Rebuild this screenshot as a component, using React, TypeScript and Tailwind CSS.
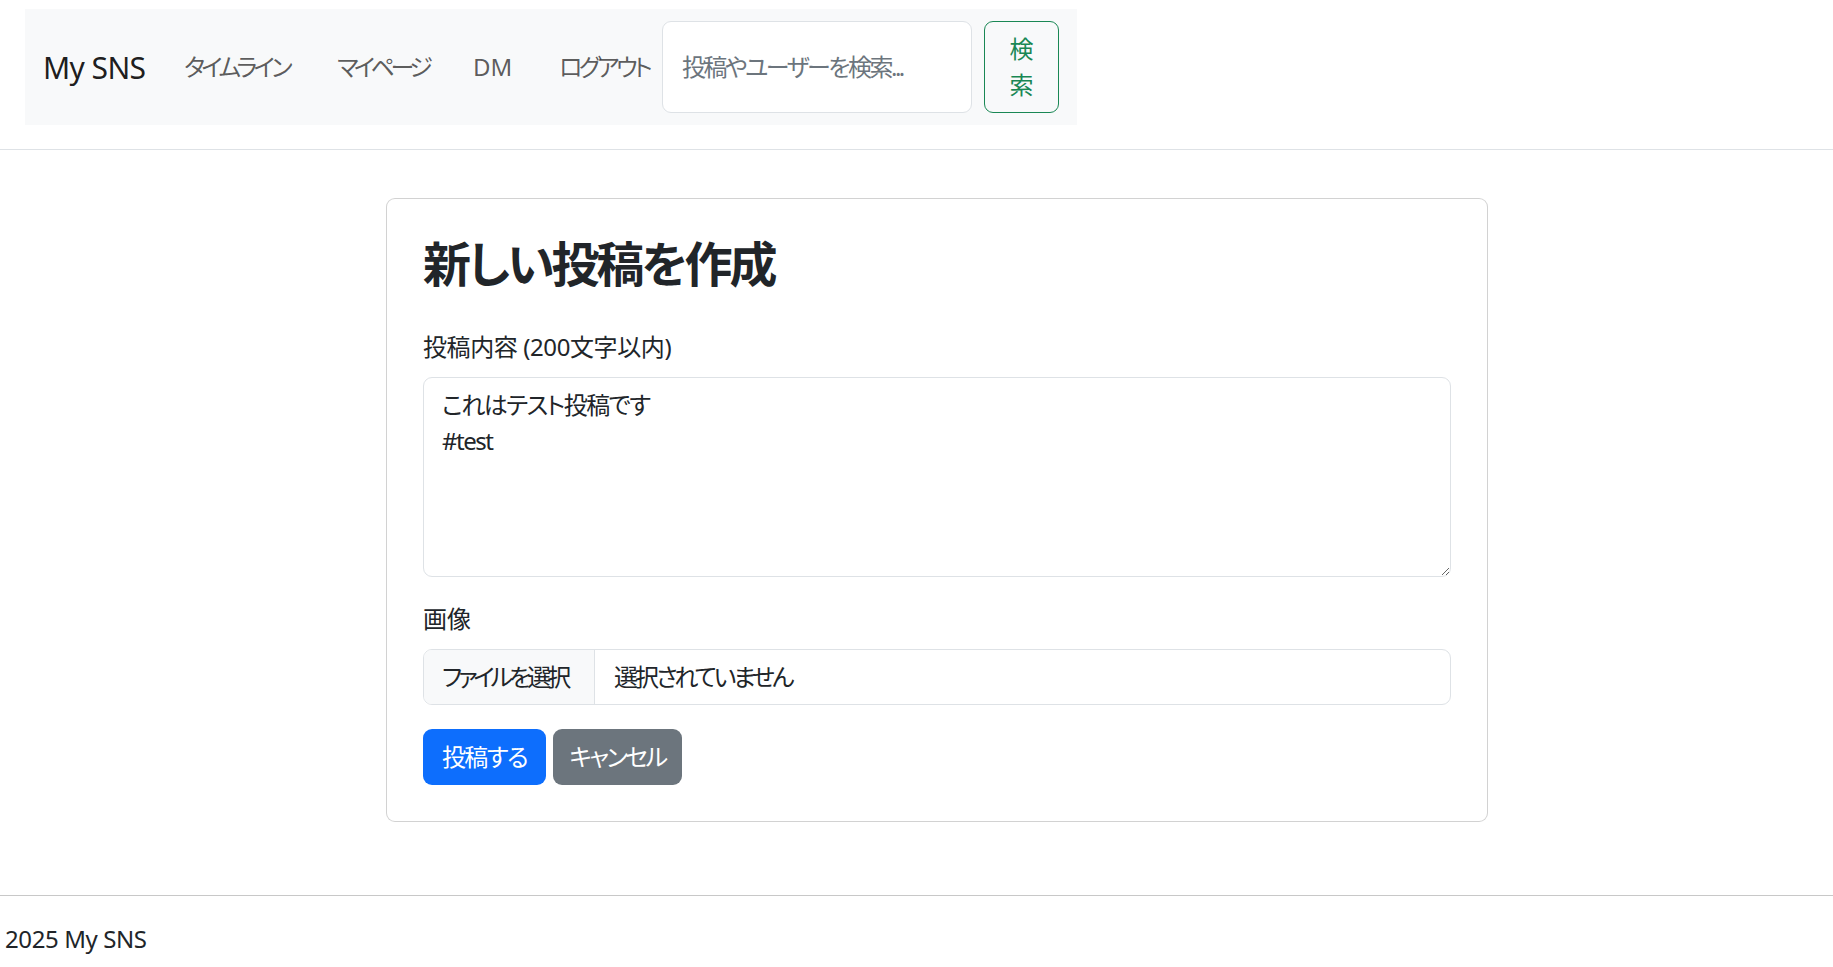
import React from "react";

const navLinks = [
  { label: "タイムライン", width: "w-[153px]", tracking: "tracking-[-3.5px]" },
  { label: "マイページ", width: "w-[136px]", tracking: "tracking-[-4.5px]" },
  { label: "DM", width: "w-[86px]", tracking: "tracking-[0px]" },
  { label: "ログアウト", width: "w-[103px]", tracking: "tracking-[-3.5px]" },
];

function Header() {
  return (
    <header className="border-b border-[#dee2e6] pb-[24px] pl-[25px] pt-[9px]">
      <nav className="inline-flex items-center bg-[#f8f9fa] py-[12px] pl-[18px] pr-[18px]">
        <a className="w-[141px] whitespace-nowrap text-[30px] leading-[45px] tracking-[-0.6px] text-black/90">My SNS</a>
        {navLinks.map((link) => (
          <a
            key={link.label}
            className={`${link.width} ${link.tracking} whitespace-nowrap text-[24px] leading-[36px] text-black/65`}
          >
            {link.label}
          </a>
        ))}
        <form className="flex gap-[12px]">
          <input
            type="search"
            placeholder="投稿やユーザーを検索..."
            className="w-[310px] rounded-[9px] border border-[#dee2e6] bg-white px-[19px] text-[24px] tracking-[-2.5px] text-[#212529] outline-none placeholder:text-[#6c757d]"
          />
          <button
            type="button"
            className="w-[75px] rounded-[9px] border border-[#198754] px-[18px] py-[9px] text-[24px] leading-[36px] text-[#198754]"
          >
            検索
          </button>
        </form>
      </nav>
    </header>
  );
}

function PostForm() {
  return (
    <div className="ml-[386px] w-[1102px] rounded-[9px] border border-black/[0.175] bg-white p-[36px]">
      <h2 className="mb-[36px] text-[48px] font-bold leading-[57.6px] tracking-[-3px] text-[#212529]">新しい投稿を作成</h2>

      <label className="mb-[12px] block text-[24px] leading-[36px] tracking-[-0.4px]">投稿内容 (200文字以内)</label>
      <textarea
        defaultValue={"これはテスト投稿です\n#test"}
        className="mb-[24px] block h-[200px] w-full resize-y rounded-[9px] border border-[#dee2e6] px-[18px] py-[9px] text-[24px] leading-[36px] tracking-[-1.5px] text-[#212529] outline-none"
      />

      <label className="mb-[12px] block text-[24px] leading-[36px]">画像</label>
      <div className="mb-[24px] flex h-[56px] overflow-hidden rounded-[9px] border border-[#dee2e6] text-[24px]">
        <div className="flex w-[171px] items-center whitespace-nowrap border-r border-[#dee2e6] bg-[#f8f9fa] px-[18px] tracking-[-4px]">
          ファイルを選択
        </div>
        <div className="flex items-center whitespace-nowrap pl-[19px] tracking-[-3px]">選択されていません</div>
      </div>

      <div className="flex gap-[7px]">
        <button
          type="button"
          className="h-[56px] w-[123px] whitespace-nowrap rounded-[9px] bg-[#0d6efd] text-[24px] tracking-[-1.5px] text-white"
        >
          投稿する
        </button>
        <button
          type="button"
          className="h-[56px] w-[129px] whitespace-nowrap rounded-[9px] bg-[#6c757d] text-[24px] tracking-[-2.5px] text-white"
        >
          キャンセル
        </button>
      </div>
    </div>
  );
}

export default function App() {
  return (
    <div className="min-h-screen bg-white font-['Noto_Sans','Noto_Sans_CJK_JP',sans-serif] text-[#212529] [font-feature-settings:'palt']">
      <Header />
      <main className="pt-[48px]">
        <PostForm />
      </main>
      <footer className="mt-[73px] border-t border-[#c8c8c8] pb-[12px] pl-[5px] pt-[25px]">
        <p className="text-[24px] leading-[36px] tracking-[-0.4px]">2025 My SNS</p>
      </footer>
    </div>
  );
}
